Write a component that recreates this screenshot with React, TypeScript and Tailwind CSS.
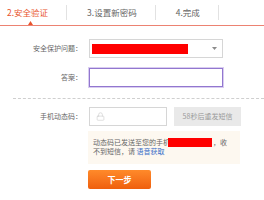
import { Lock } from "lucide-react";

const tabs = [
  { label: "2.安全验证", active: true },
  { label: "3.设置新密码", active: false },
  { label: "4.完成", active: false },
];

const font = { fontFamily: '"Noto Sans CJK SC", "Noto Sans", sans-serif' };

const FieldLabel = ({ children }: { children: React.ReactNode }) => (
  <div className="w-[82px] shrink-0 text-right text-[7px] leading-none text-[#666]">
    {children}
  </div>
);

export default function App() {
  return (
    <div className="w-[264px] h-[200px] bg-white overflow-hidden" style={font}>
      {/* Step tabs */}
      <div className="relative flex h-[26px] items-center border-b border-[#ec8272] pl-[7px]">
        {tabs.map((tab, i) => (
          <div
            key={tab.label}
            className={`relative flex h-[15px] items-center border-r border-[#e2e2e2] ${
              i === 0 ? "pr-[18px]" : "pl-[20px] pr-[18px]"
            }`}
          >
            <span
              className={`text-[8.5px] leading-none ${
                tab.active ? "text-[#e8542d]" : "text-[#666]"
              }`}
            >
              {tab.label}
            </span>
            {tab.active && (
              <svg
                className="absolute left-[21px] top-[16px]"
                width="5"
                height="4"
                viewBox="0 0 5 4"
              >
                <polygon points="2.5,0 5,4 0,4" fill="#e8542d" />
              </svg>
            )}
          </div>
        ))}
      </div>

      {/* Security question */}
      <div className="mt-[13px] flex items-center">
        <FieldLabel>安全保护问题：</FieldLabel>
        <div className="ml-[7px] flex h-[19px] w-[134px] items-center justify-between border border-[#d6d6d6] pl-[2px] pr-[5px]">
          <div className="h-[10px] w-[96px] bg-[#ff0000]" />
          <svg width="5" height="3" viewBox="0 0 5 3">
            <polygon points="0,0 5,0 2.5,3" fill="#8c8c8c" />
          </svg>
        </div>
      </div>

      {/* Answer */}
      <div className="mt-[10px] flex items-center">
        <FieldLabel>答案：</FieldLabel>
        <div className="ml-[7px] h-[19px] w-[134px] border border-[#9277cf] shadow-[0_0_0_1px_#d9cdf1]" />
      </div>

      <div className="ml-[13px] mt-[11px] border-t border-dashed border-[#cfcfcf]" />

      {/* Phone code */}
      <div className="mt-[8px] flex items-center">
        <FieldLabel>手机动态码：</FieldLabel>
        <div className="ml-[7px] flex h-[19px] w-[78px] items-center border border-[#d6d6d6] pl-[6px]">
          <Lock size={9} strokeWidth={1.5} color="#c8c8c8" />
        </div>
        <div className="ml-[7px] flex h-[19px] w-[67px] items-center justify-center bg-[#e9e9e9] text-[7px] leading-none text-[#9a9a9a]">
          58秒后重发短信
        </div>
      </div>

      {/* Notice */}
      <div className="ml-[88px] mt-[5px] h-[33px] w-[152px] bg-[#fdf8f0] px-[5px] pt-[7px] text-[7px] leading-[9px] text-[#666]">
        <div className="flex items-center whitespace-nowrap">
          <span>动态码已发送至您的手机</span>
          <span className="-ml-[2px] inline-block h-[9px] w-[44px] bg-[#ff0000]" />
          <span className="ml-[1px]">，收</span>
        </div>
        <div className="whitespace-nowrap">
          不到短信，请 <span className="text-[#3b6fc9]">语音获取</span>
        </div>
      </div>

      {/* Next */}
      <button className="ml-[88px] mt-[6px] flex h-[19px] w-[63px] items-center justify-center rounded-[2px] bg-gradient-to-b from-[#ff8a2a] to-[#ef5f0c] text-[8px] font-bold leading-none text-white">
        下一步
      </button>
    </div>
  );
}
